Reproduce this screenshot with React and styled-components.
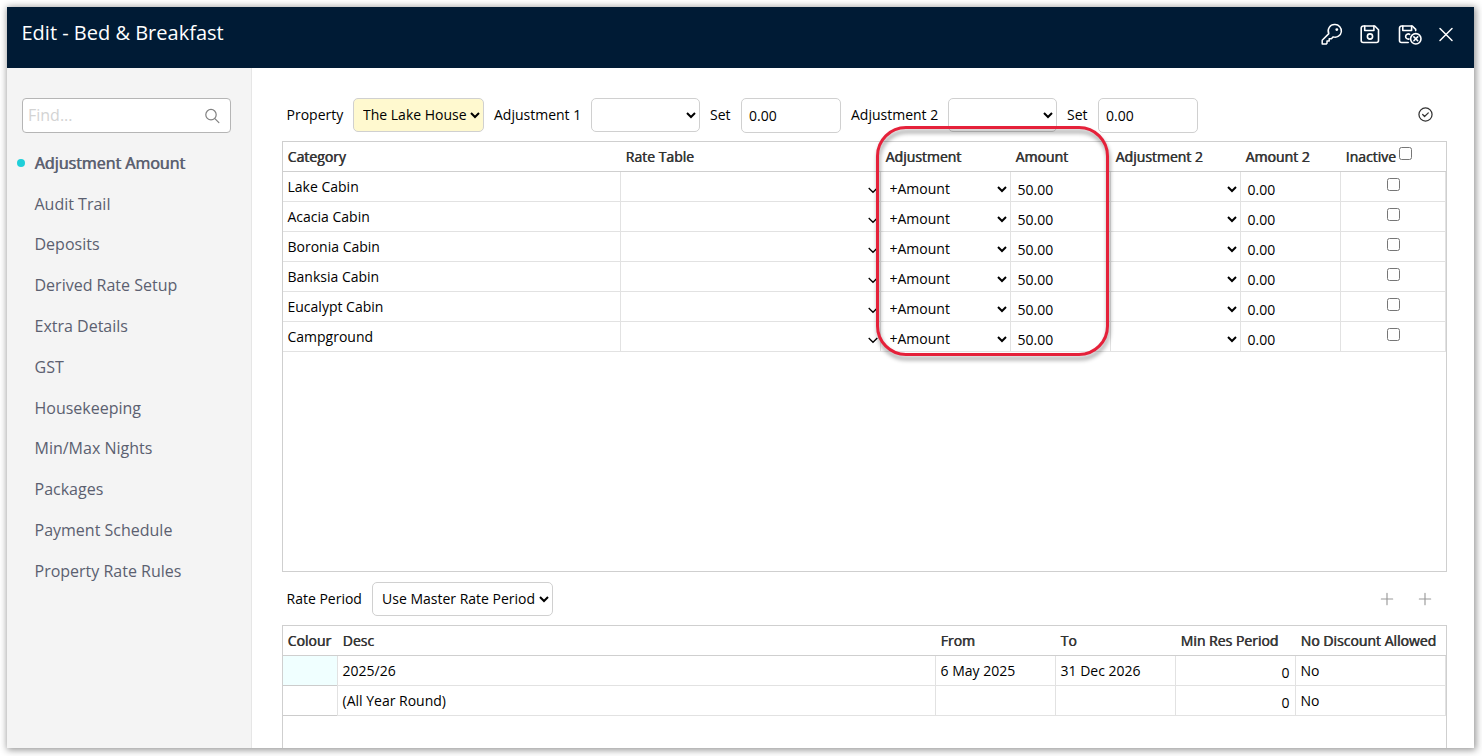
import React from "react";
import styled, { createGlobalStyle } from "styled-components";

const GlobalStyle = createGlobalStyle`
  * {
    box-sizing: border-box;
  }
  body {
    margin: 0;
    background: #ffffff;
    overflow: hidden;
  }
  body, input, select {
    font-family: "Open Sans", "Noto Sans", sans-serif;
    font-size: 14px;
    color: #000000;
  }
`;

const Page = styled.div`
  height: 756px;
  padding: 7px 8px 8px 7px;
`;

const Dialog = styled.div`
  height: 741px;
  display: flex;
  flex-direction: column;
  background: #ffffff;
  box-shadow: 1px 1px 7px 1px rgba(0, 0, 0, 0.42);
`;

const DialogHeader = styled.header`
  height: 61px;
  flex: none;
  display: flex;
  justify-content: space-between;
  padding: 0 19px 0 14.5px;
  background: #001b35;
  color: #ffffff;
`;

const Title = styled.h1`
  margin: 0;
  font-size: 20px;
  font-weight: 400;
  line-height: 52px;
`;

const HeaderIcons = styled.div`
  display: flex;
  align-items: center;
  height: 54px;
  gap: 14px;

  svg {
    display: block;
  }

  svg:nth-child(3) {
    margin-left: 1.5px;
  }
`;

const Body = styled.div`
  flex: 1;
  min-height: 0;
  display: flex;
`;

const Sidebar = styled.aside`
  width: 245px;
  flex: none;
  padding: 30px 20px 0 15px;
  background: #f4f4f4;
  border-right: 1px solid #e6e6e6;
`;

const SearchBox = styled.div`
  height: 35px;
  display: flex;
  align-items: center;
  padding: 0 10px 0 5px;
  background: #ffffff;
  border: 1px solid #b5b5b5;
  border-radius: 4px;
`;

const SearchInput = styled.input`
  all: unset;
  flex: 1;
  min-width: 0;
  padding-bottom: 2px;
  font-size: 16px;
  font-family: "Open Sans", sans-serif;

  &::placeholder {
    color: #d3d3d3;
  }
`;

const NavList = styled.ul`
  list-style: none;
  margin: 9.9px 0 0;
  padding: 0;
`;

const NavItem = styled.li`
  position: relative;
  height: 40.8px;
  padding-left: 12.5px;
  font-size: 16px;
  line-height: 41px;
  color: #5b6070;
  white-space: nowrap;
  text-shadow: ${({ $active }) => ($active ? "0.7px 0 0 #5b6070" : "none")};

  &::before {
    content: "";
    display: ${({ $active }) => ($active ? "block" : "none")};
    position: absolute;
    left: -5.5px;
    top: 16px;
    width: 8.5px;
    height: 8.5px;
    border-radius: 50%;
    background: #1fcfd9;
  }
`;

const Content = styled.main`
  flex: 1;
  min-width: 0;
  display: flex;
  flex-direction: column;
  padding: 30px 27px 0 30px;
  overflow: hidden;
`;

const Toolbar = styled.div`
  height: 43px;
  flex: none;
  display: grid;
  grid-template-columns: 66.5px 141px 97px 119px 31px 110px 97px 119px 31px 100px 1fr;
  align-items: start;
  padding: 0 14px 0 4.5px;
`;

const RateToolbar = styled.div`
  height: 53px;
  flex: none;
  display: grid;
  grid-template-columns: 85.5px 181px 1fr;
  align-items: start;
  padding: 10px 14px 0 4.5px;
`;

const Label = styled.label`
  line-height: 34px;
  white-space: nowrap;
`;

const Select = styled.select`
  width: ${({ $width }) => $width}px;
  height: 34px;
  padding: 0 0 2px 5px;
  background-color: ${({ $highlight }) => ($highlight ? "#fff9cf" : "#ffffff")};
  border: 1px solid #d0d0d0;
  border-radius: 5px;
`;

const NumberInput = styled.input`
  width: 100px;
  height: 35px;
  padding: 0 7px;
  border: 1px solid #d0d0d0;
  border-radius: 5px;
`;

const ToolbarIcons = styled.div`
  height: 33px;
  display: flex;
  align-items: center;
  justify-content: flex-end;
  gap: 22px;
`;

const Grid = styled.section`
  position: relative;
  height: ${({ $height }) => $height}px;
  flex: none;
  border: 1px solid #cfcfcf;
`;

const Row = styled.div`
  display: grid;
  grid-template-columns: ${({ $columns }) => $columns};
  grid-template-rows: 30px;
  height: 30px;
`;

const HeadRow = styled(Row)`
  border-bottom: 1px solid #cfcfcf;
`;

const HeadCell = styled.div`
  padding-left: 4.5px;
  line-height: 30px;
  color: #333333;
  white-space: nowrap;
  text-shadow: 0.6px 0 0 #333333;

  input {
    margin: 0 0 0 3px;
    position: relative;
    top: -2px;
  }
`;

const Cell = styled.div`
  min-width: 0;
  padding-left: 4.5px;
  line-height: 29px;
  border-right: 1px solid #e2e2e2;
  border-bottom: 1px solid #e2e2e2;
  white-space: nowrap;
`;

const FieldCell = styled(Cell)`
  padding: 3px 0 0 6.5px;
`;

const NumberCell = styled(Cell)`
  padding: 2px 5.5px 0 0;
  text-align: right;
`;

const SelectCell = styled(Cell)`
  padding: 0;
`;

const LookupCell = styled(Cell)`
  display: flex;
  align-items: center;
  justify-content: flex-end;
  padding: 7px 2px 0 0;
`;

const CheckCell = styled(Cell)`
  display: flex;
  align-items: flex-start;
  justify-content: center;
  padding: 6px 0 0;

  input {
    margin: 0;
  }
`;

const ColourCell = styled(Cell)`
  padding: 0;

  &::before {
    content: "";
    display: block;
    height: 29px;
    background: ${({ $colour }) => $colour};
    border-bottom: 1px solid #cccccc;
  }
`;

const CellSelect = styled.select`
  display: block;
  width: 100%;
  height: 26px;
  margin-top: 4px;
  padding: 0 0 2px 4.5px;
  border: 0;
  background: transparent;
`;

const Highlight = styled.div`
  position: absolute;
  left: 593px;
  top: -16px;
  width: 233px;
  height: 230px;
  border: 3px solid #e5213a;
  border-radius: 30px;
  filter: drop-shadow(1px 4px 2px rgba(0, 0, 0, 0.4));
  pointer-events: none;
`;

const navItems = [
  "Adjustment Amount",
  "Audit Trail",
  "Deposits",
  "Derived Rate Setup",
  "Extra Details",
  "GST",
  "Housekeeping",
  "Min/Max Nights",
  "Packages",
  "Payment Schedule",
  "Property Rate Rules",
];

const categories = [
  "Lake Cabin",
  "Acacia Cabin",
  "Boronia Cabin",
  "Banksia Cabin",
  "Eucalypt Cabin",
  "Campground",
];

const periods = [
  { colour: "#f0ffff", desc: "2025/26", from: "6 May 2025", to: "31 Dec 2026" },
  { colour: "#ffffff", desc: "(All Year Round)", from: "", to: "" },
];

const categoryColumns = "338px 260px 130px 100px 130px 100px 105px";
const periodColumns = "55px 598px 120px 120px 120px 150px";

const Icon = ({ size = 24, width = 1.5, children }) => (
  <svg
    width={size}
    height={size}
    viewBox="0 0 24 24"
    fill="none"
    stroke="currentColor"
    strokeWidth={width}
    strokeLinecap="round"
    strokeLinejoin="round"
  >
    {children}
  </svg>
);

const KeyIcon = () => (
  <Icon>
    <path d="M14.9 2.6a6.3 6.3 0 1 1-1.7 12.3l-1.8 1.8H9.2v2.2H7v2.3l-.7.7H2.2v-3.7l6.6-6.6A6.3 6.3 0 0 1 14.9 2.6Z" />
    <circle cx="16.8" cy="7.6" r="0.7" fill="currentColor" />
  </Icon>
);

const SaveIcon = () => (
  <Icon width={1.6}>
    <path d="M5.2 4h11.6l3.7 3.7v10.8a2 2 0 0 1-2 2H5.2a2 2 0 0 1-2-2V6a2 2 0 0 1 2-2Z" />
    <path d="M6.7 4v4.5h9.2V4" />
    <circle cx="12" cy="14.5" r="2.6" />
  </Icon>
);

const SaveCloseIcon = () => (
  <svg
    width="26"
    height="24"
    viewBox="0 0 26 24"
    fill="none"
    stroke="currentColor"
    strokeWidth="1.6"
    strokeLinecap="round"
    strokeLinejoin="round"
  >
    <path d="M11.2 20.5H4.5a2 2 0 0 1-2-2V6a2 2 0 0 1 2-2h10.8l3.4 3.4v1.2" />
    <path d="M5.8 4v4.5h8.8V4" />
    <path d="M12.6 12.3a2.6 2.6 0 1 0-.6 4.7" />
    <circle cx="18.8" cy="16.8" r="5.2" />
    <path d="m16.9 14.9 3.8 3.8M20.7 14.9l-3.8 3.8" />
  </svg>
);

const CloseIcon = () => (
  <Icon size={18}>
    <path d="M4 4.6l16 16M20 4.6l-16 16" strokeWidth="2" />
  </Icon>
);

const SearchIcon = () => (
  <Icon size={16} width={1.8}>
    <g stroke="#808080">
      <circle cx="10.5" cy="10" r="7.8" />
      <path d="m16.3 16 6 6" />
    </g>
  </Icon>
);

const CheckIcon = () => (
  <Icon size={15} width={2}>
    <g stroke="#333333">
      <circle cx="12" cy="12" r="10.5" />
      <path d="m7.5 12 3 3.2 6-5.8" />
    </g>
  </Icon>
);

const PlusIcon = () => (
  <Icon size={16} width={1.7}>
    <path d="M12 3.5v17M3.5 12h17" stroke="#999999" />
  </Icon>
);

const ChevronIcon = () => (
  <svg width="10" height="7" viewBox="0 0 10 7" fill="none" stroke="#000000" strokeWidth="1.3">
    <path d="m0.7 1 4.3 4.3L9.3 1" />
  </svg>
);

export default function App() {
  return (
    <>
      <GlobalStyle />
      <Page>
        <Dialog>
          <DialogHeader>
            <Title>Edit - Bed &amp; Breakfast</Title>
            <HeaderIcons>
              <KeyIcon />
              <SaveIcon />
              <SaveCloseIcon />
              <CloseIcon />
            </HeaderIcons>
          </DialogHeader>
          <Body>
            <Sidebar>
              <SearchBox>
                <SearchInput placeholder="Find..." />
                <SearchIcon />
              </SearchBox>
              <NavList>
                {navItems.map((item, i) => (
                  <NavItem key={item} $active={i === 0}>
                    {item}
                  </NavItem>
                ))}
              </NavList>
            </Sidebar>
            <Content>
              <Toolbar>
                <Label>Property</Label>
                <Select $width={131} $highlight>
                  <option>The Lake House</option>
                </Select>
                <Label>Adjustment 1</Label>
                <Select $width={109} />
                <Label>Set</Label>
                <NumberInput defaultValue="0.00" />
                <Label>Adjustment 2</Label>
                <Select $width={109} />
                <Label>Set</Label>
                <NumberInput defaultValue="0.00" />
                <ToolbarIcons>
                  <CheckIcon />
                </ToolbarIcons>
              </Toolbar>

              <Grid $height={431}>
                <HeadRow $columns={categoryColumns}>
                  <HeadCell>Category</HeadCell>
                  <HeadCell>Rate Table</HeadCell>
                  <HeadCell>Adjustment</HeadCell>
                  <HeadCell>Amount</HeadCell>
                  <HeadCell>Adjustment 2</HeadCell>
                  <HeadCell>Amount 2</HeadCell>
                  <HeadCell>
                    Inactive
                    <input type="checkbox" />
                  </HeadCell>
                </HeadRow>
                {categories.map((name) => (
                  <Row key={name} $columns={categoryColumns}>
                    <Cell>{name}</Cell>
                    <LookupCell>
                      <ChevronIcon />
                    </LookupCell>
                    <SelectCell>
                      <CellSelect>
                        <option>+Amount</option>
                      </CellSelect>
                    </SelectCell>
                    <FieldCell>50.00</FieldCell>
                    <SelectCell>
                      <CellSelect />
                    </SelectCell>
                    <FieldCell>0.00</FieldCell>
                    <CheckCell>
                      <input type="checkbox" />
                    </CheckCell>
                  </Row>
                ))}
                <Highlight />
              </Grid>

              <RateToolbar>
                <Label>Rate Period</Label>
                <Select $width={181}>
                  <option>Use Master Rate Period</option>
                </Select>
                <ToolbarIcons>
                  <PlusIcon />
                  <PlusIcon />
                </ToolbarIcons>
              </RateToolbar>

              <Grid $height={160}>
                <HeadRow $columns={periodColumns}>
                  <HeadCell>Colour</HeadCell>
                  <HeadCell>Desc</HeadCell>
                  <HeadCell>From</HeadCell>
                  <HeadCell>To</HeadCell>
                  <HeadCell>Min Res Period</HeadCell>
                  <HeadCell>No Discount Allowed</HeadCell>
                </HeadRow>
                {periods.map(({ colour, desc, from, to }) => (
                  <Row key={desc} $columns={periodColumns}>
                    <ColourCell $colour={colour} />
                    <Cell>{desc}</Cell>
                    <Cell>{from}</Cell>
                    <Cell>{to}</Cell>
                    <NumberCell>0</NumberCell>
                    <Cell>No</Cell>
                  </Row>
                ))}
              </Grid>
            </Content>
          </Body>
        </Dialog>
      </Page>
    </>
  );
}
